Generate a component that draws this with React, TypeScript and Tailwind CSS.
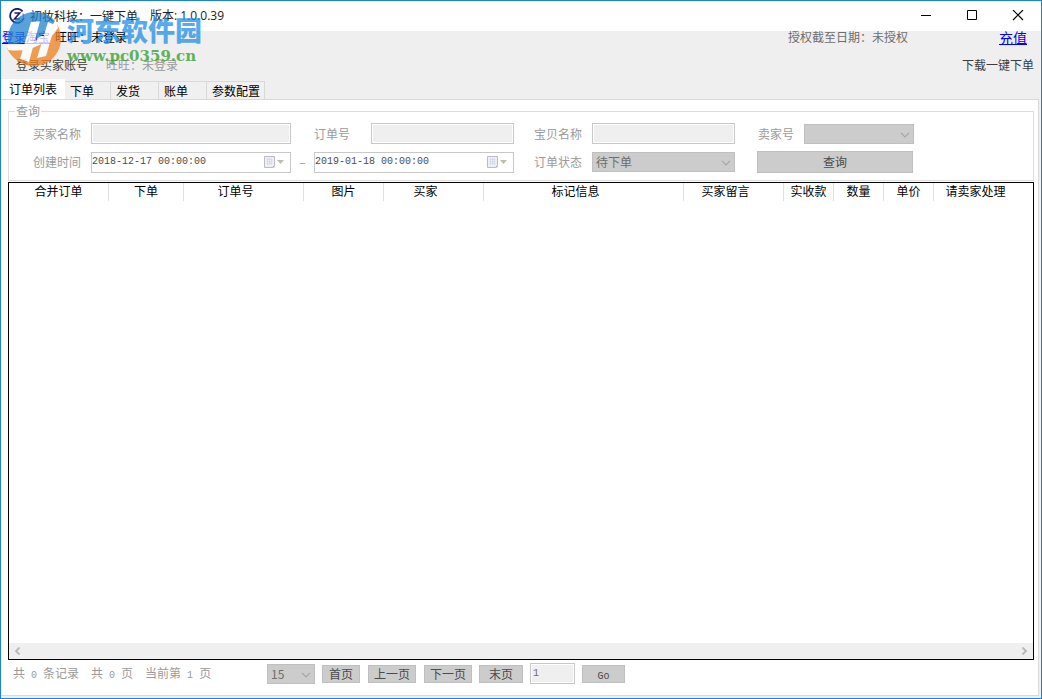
import { ReactNode } from 'react'
import clsx from 'clsx'

const TABS = [
  { label: '订单列表', width: 'w-16', active: true },
  { label: '下单', width: 'w-[46px]' },
  { label: '发货', width: 'w-12' },
  { label: '账单', width: 'w-12' },
  { label: '参数配置', width: 'w-[58px]' },
]

const COLUMNS = [
  { label: '合并订单', width: 'w-[100px]' },
  { label: '下单', width: 'w-[75px]' },
  { label: '订单号', width: 'w-[120px]', shift: 'pr-4' },
  { label: '图片', width: 'w-20' },
  { label: '买家', width: 'w-[100px]', shift: 'pr-4' },
  { label: '标记信息', width: 'w-[200px]', shift: 'pr-4' },
  { label: '买家留言', width: 'w-[100px]', shift: 'pr-4' },
  { label: '实收款', width: 'w-[50px]' },
  { label: '数量', width: 'w-[50px]' },
  { label: '单价', width: 'w-[50px]' },
]

function Mono({ children }: { children: ReactNode }) {
  return <span className="font-['Liberation_Mono',monospace] text-[10px]">{children}</span>
}

function AppIcon() {
  return (
    <svg viewBox="0 0 16 16" className="w-4 h-4" fill="none" stroke="#1d1b6e">
      <path d="M13.6 3.4A7 7 0 1 0 14.8 10" strokeWidth="1.8" />
      <path d="M14 5.5A6.6 6.6 0 0 1 11 13.6" stroke="#7c7be0" strokeWidth="1.2" />
      <path d="M5.5 5h5.2l-5.2 6h5.4" strokeWidth="1.6" />
    </svg>
  )
}

function Watermark() {
  return (
    <div className="absolute left-[6px] top-[11px] flex pointer-events-none opacity-75" aria-hidden="true">
      <svg viewBox="0 0 54 54" className="w-[54px] h-[54px]">
        <path d="M1 32C-1 16 9 1 27 0c9 0 16 3 21 9-8 15-25 24-47 23z" fill="#1f83cf" />
        <path d="M50 12c5 9 5 19 1 27-5 10-14 15-25 15C14 53 5 47 0 36c22 5 41-5 50-24z" fill="#f0801c" />
        <path d="M24 10l9-1-11 41-9-3z" fill="#fff" />
        <path d="M41 10l7 3-9 31-9 2z" fill="#fff" />
        <path d="M0 33c18 3 36-4 50-22l1 5C40 33 21 41 1 38z" fill="#fff" />
      </svg>
      <div className="pl-[6px] pt-1">
        <div className="text-[27px] leading-[28px] font-black text-[#1f8fe8] whitespace-nowrap">河东软件园</div>
        <div className="font-['DejaVu_Serif',serif] text-[15px] leading-6 font-bold text-[#2f9d27]">www.pc0359.cn</div>
      </div>
    </div>
  )
}

function CalendarMark() {
  return (
    <svg viewBox="0 0 22 14" className="w-[22px] h-[14px]">
      <path d="M1.5 1.5h10v9l-2 2h-8z" fill="#eef0f5" stroke="#b9bcc8" />
      <path d="M3.5 4.5h6M3.5 6.5h6M3.5 8.5h6M4.5 3v7M6.5 3v7M8.5 3v7" stroke="#cfd3e0" strokeWidth="0.6" />
      <path d="M9 12.5l2.5-2.5v2.5z" fill="#b4a9a9" />
      <path d="M14 5h7l-3.500 4z" fill="#bdbdb0" />
    </svg>
  )
}

function DateBox({ value, label }: { value: string; label: string }) {
  return (
    <div className="flex items-center w-[200px] h-[21px] border border-[#c8c8c8] bg-white pr-[5px]">
      <input
        aria-label={label}
        disabled
        defaultValue={value}
        className="w-0 flex-1 font-['Liberation_Mono',monospace] text-[10px] text-[#4c4c4c]"
      />
      <CalendarMark />
    </div>
  )
}

function Dropdown({ id, label, value, className }: { id?: string; label?: string; value: string; className: string }) {
  return (
    <div className={clsx('relative h-5', className)}>
      <select
        id={id}
        aria-label={label}
        disabled
        className="w-full h-full appearance-none border border-[#bfbfbf] bg-[#cccccc] pl-[3px] text-[#6d6d6d] opacity-100"
      >
        <option>{value}</option>
      </select>
      <svg viewBox="0 0 10 6" className="absolute right-1 top-2 w-[10px] h-[6px]" fill="none" stroke="#a6a6a6">
        <path d="M1 .8l4 4 4-4" strokeWidth="1.2" />
      </svg>
    </div>
  )
}

function TextBox({ id, className }: { id: string; className: string }) {
  return (
    <input
      id={id}
      type="text"
      disabled
      className={clsx('h-[21px] border border-[#c8c8c8] bg-[#efefef] ring-1 ring-inset ring-white', className)}
    />
  )
}

function GrayButton({ children, className }: { children: ReactNode; className: string }) {
  return (
    <button disabled className={clsx('border border-[#bfbfbf] bg-[#cccccc] leading-4 text-[#4a4a4a]', className)}>
      {children}
    </button>
  )
}

export default function App() {
  return (
    <div className="relative min-h-screen flex flex-col border border-[#1883d7] bg-[#efefef] text-xs text-black whitespace-nowrap font-['Noto_Sans_CJK_SC',sans-serif]">
      <header className="flex items-center justify-between h-[30px] bg-white pl-2 pr-[17px] text-[#222]">
        <div className="flex items-center">
          <AppIcon />
          <h1 className="pl-[5px]">初妆科技：一键下单</h1>
          <span className="pl-3 font-['Open_Sans','Noto_Sans_CJK_SC',sans-serif]">版本: 1.0.0.39</span>
        </div>
        <div className="flex items-center gap-[34px]">
          <button aria-label="最小化">
            <svg viewBox="0 0 12 12" className="w-3 h-3" stroke="#000"><path d="M1 5.500h10" /></svg>
          </button>
          <button aria-label="最大化">
            <svg viewBox="0 0 12 12" className="w-3 h-3" fill="none" stroke="#000"><path d="M1.500 .500h9v9h-9z" /></svg>
          </button>
          <button aria-label="关闭">
            <svg viewBox="0 0 12 12" className="w-3 h-3" stroke="#000" strokeWidth="1.200"><path d="M1 0l10 10M11 0L1 10" /></svg>
          </button>
        </div>
      </header>

      <div className="flex items-center h-3 pl-px pr-[14px]">
        <a href="#" className="text-[#0000ff] underline">登录淘宝</a>
        <span className="pl-[5px]">旺旺：未登录</span>
        <span className="ml-auto text-[#6d6d6d]">授权截至日期：未授权</span>
        <a href="#" className="ml-[91px] text-sm leading-3 text-[#0000ff] underline">充值</a>
      </div>
      <div className="flex items-center h-[14px] mt-[15px] pl-[15px] pr-[7px] text-[#3c3c3c]">
        <button>登录买家账号</button>
        <span className="pl-[18px] text-[#9a9a9a]">旺旺：未登录</span>
        <button className="ml-auto">下载一键下单</button>
      </div>

      <nav className="flex items-end h-5 mt-[7px]">
        {TABS.map(tab => (
          <button
            key={tab.label}
            className={clsx(
              'text-left leading-4',
              tab.width,
              tab.active ? 'h-5 bg-white pl-2' : 'h-[18px] border-t border-r border-[#d9d9d9] bg-[#f0f0f0] pl-[5px]'
            )}
          >
            {tab.label}
          </button>
        ))}
      </nav>

      <main className="flex-1 flex flex-col mr-[2px] mb-[2px] border-t border-r border-b border-[#d9d9d9] bg-white pl-[7px] pr-1">
        <fieldset className="mt-[3px] border border-[#dcdcdc] pl-6 text-[#9a9a9a]">
          <legend className="-ml-[18px] px-px leading-4">查询</legend>
          <div className="flex items-center mt-1">
            <label htmlFor="buyer" className="w-[58px]">买家名称</label>
            <TextBox id="buyer" className="w-[200px]" />
            <label htmlFor="order" className="w-[57px] ml-[23px]">订单号</label>
            <TextBox id="order" className="w-[143px]" />
            <label htmlFor="goods" className="w-[58px] ml-5">宝贝名称</label>
            <TextBox id="goods" className="w-[143px]" />
            <label htmlFor="seller" className="w-[46px] ml-[23px]">卖家号</label>
            <Dropdown id="seller" value="" className="w-[110px]" />
          </div>
          <div className="flex items-center mt-[7px] mb-[7px]">
            <span className="w-[58px]">创建时间</span>
            <DateBox label="开始时间" value="2018-12-17 00:00:00" />
            <span className="w-[23px] text-center">–</span>
            <DateBox label="结束时间" value="2019-01-18 00:00:00" />
            <label htmlFor="status" className="w-[58px] ml-5">订单状态</label>
            <Dropdown id="status" value="待下单" className="w-[143px]" />
            <GrayButton className="w-[156px] h-[22px] ml-[22px]">查询</GrayButton>
          </div>
        </fieldset>

        <div className="flex-1 flex flex-col mt-px border border-black">
          <table className="w-full table-fixed border-separate border-spacing-0">
            <thead>
              <tr className="h-[18px] leading-4 align-top">
                {COLUMNS.map(col => (
                  <th key={col.label} className={clsx('p-0 align-top font-normal border-r border-[#e0e0e0]', col.width, col.shift)}>
                    {col.label}
                  </th>
                ))}
                <th className="p-0 pr-4 align-top font-normal">请卖家处理</th>
              </tr>
            </thead>
          </table>
          <div className="flex items-center justify-between h-4 mt-auto bg-[#efefef] px-[5px]">
            <svg viewBox="0 0 7 8" className="w-[7px] h-2" fill="none" stroke="#b8b8b8" strokeWidth="1.800">
              <path d="M5.500.500L2 4l3.500 3.500" />
            </svg>
            <svg viewBox="0 0 7 8" className="w-[7px] h-2" fill="none" stroke="#b8b8b8" strokeWidth="1.800">
              <path d="M1.500.500L5 4 1.500 7.500" />
            </svg>
          </div>
        </div>

        <footer className="flex items-center h-[21px] mt-[3px] mb-[11px] pl-[5px] text-[#9a9a9a]">
          <div className="flex w-[254px] gap-3">
            <span>共<Mono>&nbsp;0&nbsp;</Mono>条记录</span>
            <span>共<Mono>&nbsp;0&nbsp;</Mono>页</span>
            <span>当前第<Mono>&nbsp;1&nbsp;</Mono>页</span>
          </div>
          <Dropdown label="每页条数" value="15" className="w-12" />
          <GrayButton className="w-[38px] h-[18px] ml-[7px]">首页</GrayButton>
          <GrayButton className="w-12 h-[18px] ml-2">上一页</GrayButton>
          <GrayButton className="w-12 h-[18px] ml-2">下一页</GrayButton>
          <GrayButton className="w-11 h-[18px] ml-[7px]">末页</GrayButton>
          <input
            aria-label="页码"
            disabled
            defaultValue="1"
            className="w-[45px] h-[21px] ml-[7px] border border-[#c8c8c8] bg-[#efefef] pl-[2px] ring-1 ring-inset ring-white font-['Liberation_Mono',monospace] text-[10px] text-[#6d6d6d]"
          />
          <GrayButton className="w-[43px] h-[18px] ml-[7px]"><Mono>Go</Mono></GrayButton>
        </footer>
      </main>

      <Watermark />
    </div>
  )
}
